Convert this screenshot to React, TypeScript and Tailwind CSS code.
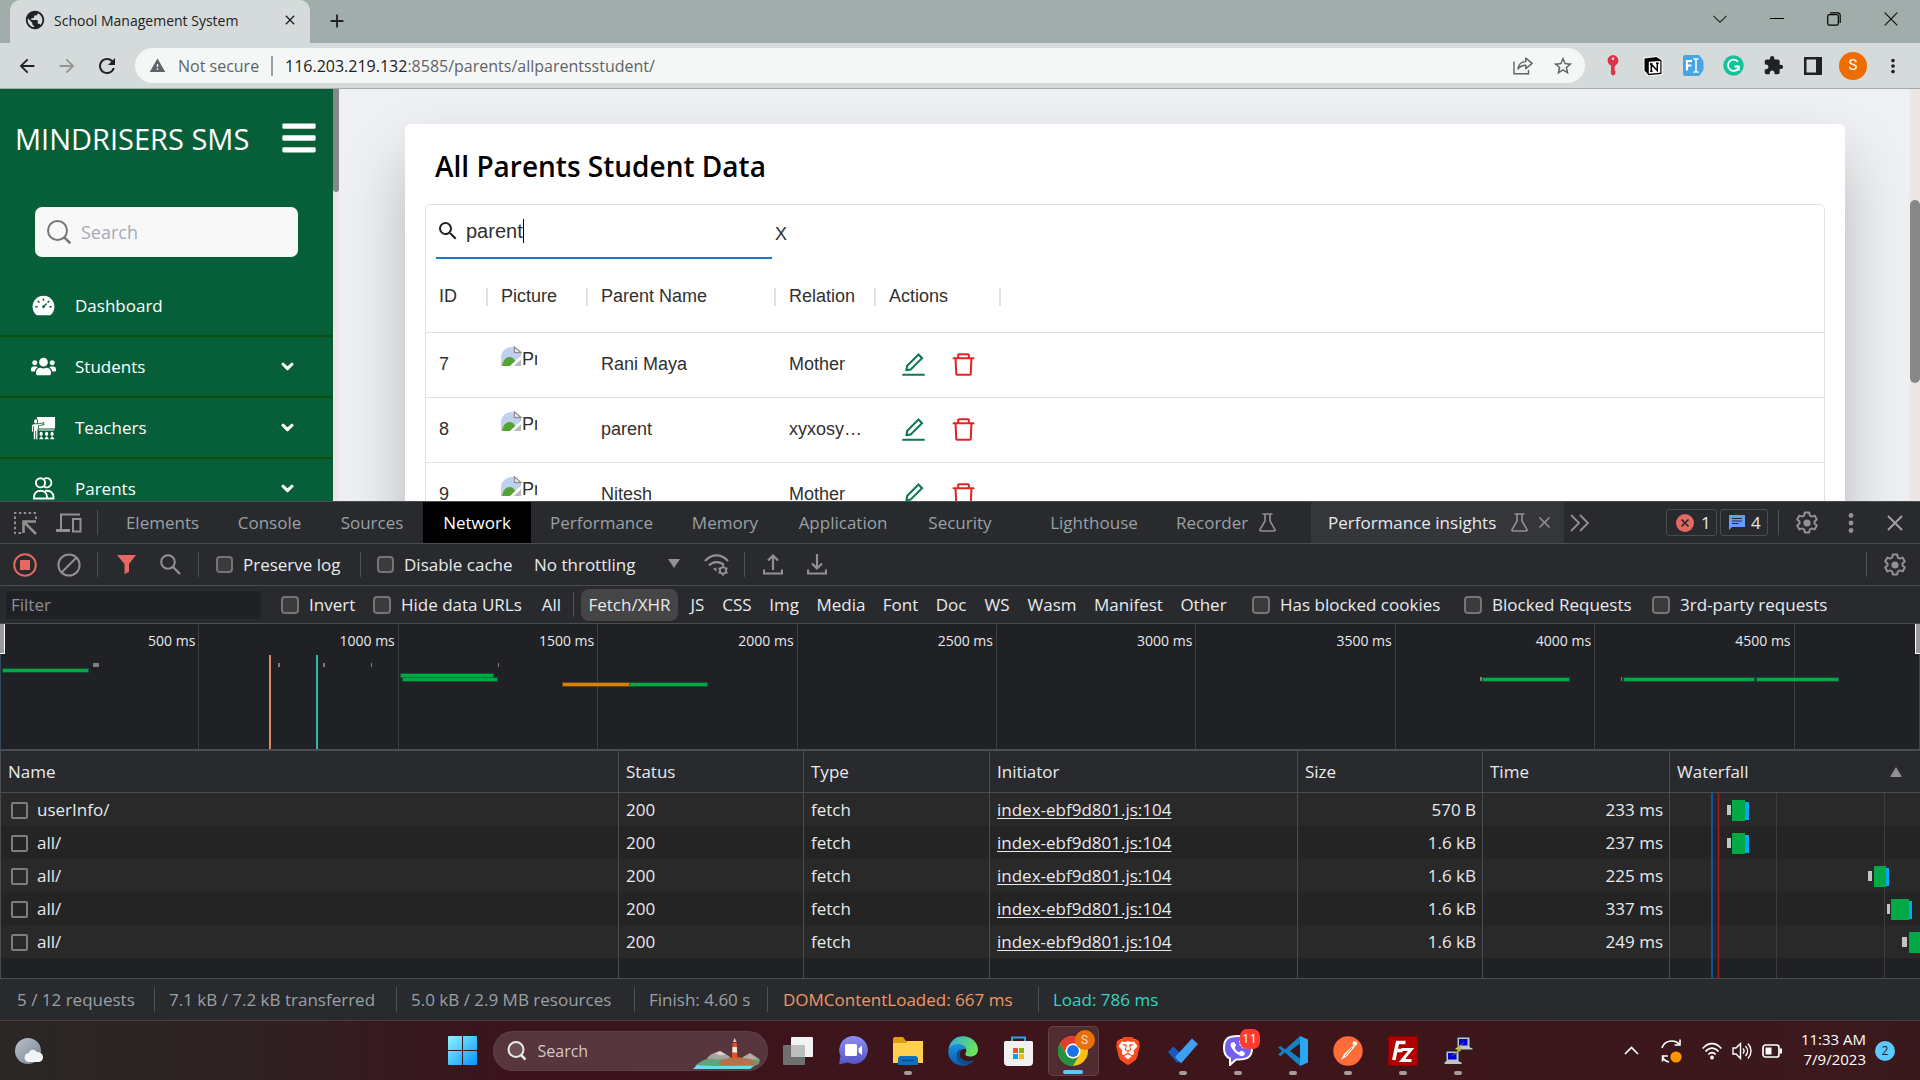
import React from "react";
import {
  MdAdd, MdArrowBack, MdArrowForward, MdClose, MdExtension, MdMoreVert, MdPublic, MdRefresh, MdSearch, MdStarBorder, MdWarning,
} from "react-icons/md";
import { FaBars, FaChevronDown, FaUsers } from "react-icons/fa";
import { AiFillDashboard, AiOutlineDelete, AiOutlineEdit } from "react-icons/ai";
import { GiTeacher } from "react-icons/gi";
import { SiBrave } from "react-icons/si";

type Kids = { children?: React.ReactNode };

/* ---------- Browser chrome ---------- */

function TabStrip() {
  return (
    <header className="flex h-[43px] shrink-0 items-stretch bg-[#a0adaa] text-[#202124]">
      <div className="ml-[10px] flex w-[300px] items-center rounded-t-[10px] bg-[#d5dbda] pb-[3px] pl-[14px] pr-[10px]">
        <MdPublic className="size-[22px] shrink-0" />
        <span className="ml-2 flex-1 whitespace-nowrap text-[14px]">School Management System</span>
        <button aria-label="Close tab" className="flex size-5 items-center justify-center"><MdClose className="size-4" /></button>
      </div>
      <button aria-label="New tab" className="ml-[16px] flex items-center pb-[2px]"><MdAdd className="size-[22px]" /></button>
      <div className="ml-auto flex items-center pb-[6px] pr-[1px]">
        <button aria-label="Search tabs" className="flex w-[57px] justify-center">
          <svg width="14" height="8" viewBox="0 0 14 8" fill="none" stroke="#222" strokeWidth="1.1"><path d="M.5.8 7 7.2 13.5.8" /></svg>
        </button>
        <button aria-label="Minimize" className="flex w-[57px] justify-center">
          <svg width="14" height="2" viewBox="0 0 14 2"><path d="M0 .5h14" stroke="#000" strokeWidth="1" /></svg>
        </button>
        <button aria-label="Restore" className="flex w-[57px] justify-center">
          <svg width="14" height="14" viewBox="0 0 14 14" fill="none" stroke="#000" strokeWidth="1.2"><rect x=".7" y="2.6" width="10.6" height="10.6" rx="1.6" /><path d="M3 .8h7.6a2.6 2.6 0 0 1 2.6 2.6V11" /></svg>
        </button>
        <button aria-label="Close window" className="flex w-[57px] justify-center">
          <svg width="14" height="14" viewBox="0 0 14 14"><path d="M.7.7l12.6 12.6M13.3.7.7 13.3" stroke="#111" strokeWidth="1.2" /></svg>
        </button>
      </div>
    </header>
  );
}

function ToolbarSlot({ children, label }: Kids & { label: string }) {
  return <button aria-label={label} className="flex w-10 items-center justify-center">{children}</button>;
}

function AddressBar() {
  return (
    <div className="flex h-[46px] shrink-0 items-center border-b border-[#a3acab] bg-[#d5dbda] pl-[7px] pr-[7px] text-[#202124]">
      <ToolbarSlot label="Back"><MdArrowBack className="size-[22px]" /></ToolbarSlot>
      <ToolbarSlot label="Forward"><MdArrowForward className="size-[22px] text-[#8f9594]" /></ToolbarSlot>
      <ToolbarSlot label="Reload"><MdRefresh className="size-6" /></ToolbarSlot>
      <div className="ml-2 flex h-[35px] flex-1 items-center rounded-full bg-[#f4f7f6] pl-[14px] pr-[2px]">
        <MdWarning className="size-[17px] text-[#5f6368]" />
        <span className="ml-3 w-[85px] whitespace-nowrap text-[16px] text-[#5f6368]">Not secure</span>
        <span className="ml-2 h-5 w-[2px] bg-[#9a9fa0]" />
        <span className="ml-[12px] flex-1 whitespace-nowrap text-[16px] text-[#5f6368]"><span className="text-[#202124]">116.203.219.132</span>:8585/parents/allparentsstudent/</span>
        <ToolbarSlot label="Share">
          <svg width="20" height="19" viewBox="0 0 20 19" fill="none" stroke="#5f6368" strokeWidth="1.4"><path d="M1 5.5V17.8h14.5V14" /><path d="M5 13c.4-4.6 3-7.2 7.8-7.4V2l6.300 5.400-6.300 5.200V9.200C9.500 9.200 7 10.200 5 13Z" strokeLinejoin="round" /></svg>
        </ToolbarSlot>
        <ToolbarSlot label="Bookmark"><MdStarBorder className="size-[22px] text-[#5f6368]" /></ToolbarSlot>
      </div>
      <div className="ml-[8px] flex items-center">
        <ToolbarSlot label="Password extension">
          <svg width="12" height="21" viewBox="0 0 12 21"><circle cx="6" cy="5.500" r="5.400" fill="#dd3547" /><circle cx="6" cy="3.800" r="1.300" fill="#d5dbda" /><path d="M4 9h4.300v2.500l-1.300 1 1.300 1-1.300 1 1.300 1V19L6.200 20.800 4 19Z" fill="#dd3547" /></svg>
        </ToolbarSlot>
        <ToolbarSlot label="Notion">
          <svg width="20" height="20" viewBox="0 0 20 20"><path d="M1.500 2.500 13.500 1l5 3.200V18l-13 1.200-4-4.700Z" fill="#fff" stroke="#fff" strokeWidth="2" /><path d="M1.500 2.500 13.500 1l5 3.200V18l-13 1.200-4-4.700Z" fill="#000" /><path d="M5.800 5.700 17.300 4.900V16.800L5.800 17.700Z" fill="#fff" /><path d="M8.300 15V8.200l6 6.500V7.300M7 8h2.700M7.200 15.200h2.400M13 7.300h2.700" fill="none" stroke="#000" strokeWidth="1.500" /></svg>
        </ToolbarSlot>
        <ToolbarSlot label="Fill extension">
          <svg width="21" height="21" viewBox="0 0 21 21"><path d="M2 0h14l4.500 6v9L16 21H2a2 2 0 0 1-2-2V2a2 2 0 0 1 2-2Z" fill="#46a5e5" /><path d="M4 15.500V6h5M4 10.500h4.400" fill="none" stroke="#fff" strokeWidth="2.200" /><path d="M10.500 3.800c1.500 0 2 .4 2.500 1 .500-.6 1-1 2.500-1M10.500 17.300c1.500 0 2-.4 2.500-1 .500.6 1 1 2.500 1M13 4.800v11.500" fill="none" stroke="#fff" strokeWidth="1.500" /></svg>
        </ToolbarSlot>
        <ToolbarSlot label="Grammarly">
          <svg width="21" height="21" viewBox="0 0 21 21"><circle cx="10.500" cy="10.500" r="10.200" fill="#15c39a" /><path d="M15 6.800A5.600 5.600 0 1 0 15.500 13M11.500 11.500h4.300v4" fill="none" stroke="#fff" strokeWidth="1.800" /></svg>
        </ToolbarSlot>
        <ToolbarSlot label="Extensions"><MdExtension className="size-[21px]" /></ToolbarSlot>
        <ToolbarSlot label="Side panel">
          <svg width="18" height="18" viewBox="0 0 18 18"><path d="M0 0h18v18H0ZM2.500 2.500v13H12v-13Z" fill="#202124" fillRule="evenodd" /></svg>
        </ToolbarSlot>
        <ToolbarSlot label="Profile"><span className="flex size-7 items-center justify-center rounded-full bg-[#ef6c00] font-[Roboto] text-[15px] text-white">S</span></ToolbarSlot>
        <ToolbarSlot label="Menu"><MdMoreVert className="size-[22px]" /></ToolbarSlot>
      </div>
    </div>
  );
}

/* ---------- Page ---------- */

function ParentsIcon({ className }: { className?: string }) {
  return (
    <svg viewBox="0 0 25 25" className={className} fill="none" stroke="currentColor" strokeWidth="1.900">
      <circle cx="9.500" cy="6.800" r="4.600" /><path d="M13 3.100a4.600 4.600 0 1 1 0 7.400" />
      <path d="M3 22.500v-1.500c0-4 2.800-6.300 6.500-6.300S16 17 16 21v1.500Z" />
      <path d="M14 14.800c5-.6 8.500 1.700 8.500 6.200v1.500H17" />
    </svg>
  );
}

const menu = [
  { label: "Dashboard", Icon: AiFillDashboard, sub: false },
  { label: "Students", Icon: FaUsers, sub: true },
  { label: "Teachers", Icon: GiTeacher, sub: true },
  { label: "Parents", Icon: ParentsIcon, sub: true },
];

function Sidebar() {
  return (
    <>
      <aside className="w-[333px] shrink-0 overflow-hidden bg-[#075f3a] text-white">
        <div className="flex h-[118px] items-start justify-between pl-[15px] pr-[15px] pt-[28px]">
          <h1 className="whitespace-nowrap text-[29px] leading-[44px]">MINDRISERS SMS</h1>
          <button aria-label="Toggle menu" className="mt-[2px]"><FaBars className="size-[38px]" /></button>
        </div>
        <label className="ml-[35px] flex h-[50px] w-[263px] items-center rounded-[7px] bg-[#f8f8f8] pl-[12px]">
          <svg width="24" height="24" viewBox="0 0 24 24" fill="none" stroke="#77777b" strokeWidth="2"><circle cx="10.500" cy="10.500" r="9.500" /><path d="m17.300 17.300 6 6" strokeWidth="2.600" /></svg>
          <input aria-label="Search" placeholder="Search" className="ml-[10px] w-[200px] bg-transparent text-[18px] outline-none placeholder:text-[#a4abb8]" />
        </label>
        <nav className="mt-[19px]">
          {menu.map(({ label, Icon, sub }) => (
            <a key={label} href="#" className="flex h-[61px] items-center border-b-2 border-[#0a5209] pl-[31px] pr-[39px]">
              <Icon className="size-[25px]" />
              <span className="ml-[19px] flex-1 text-[17px]">{label}</span>
              {sub && <FaChevronDown className="size-[13px] stroke-current stroke-[40]" />}
            </a>
          ))}
        </nav>
      </aside>
      <div className="w-[6px] shrink-0 bg-[#ece6e6]"><div className="h-[103px] rounded-b-full bg-[#888]" /></div>
    </>
  );
}

function BrokenImage() {
  return (
    <span role="img" aria-label="Profile" className="flex h-[37px] w-9 items-start overflow-hidden whitespace-nowrap">
      <svg width="21" height="20" viewBox="0 0 21 20" className="shrink-0">
        <path d="M0 20V11C.5 5 5 1 13 0.500V6h7v6L11 20Z" fill="#c0d0f0" />
        <path d="M1 20c1-6 4-9 7.500-9 3 0 4.500 2 6 4.500L11 20Z" fill="#54a335" />
        <path d="M13.500 1v5.500H20Z" fill="#fff" stroke="#909090" strokeWidth="1.300" />
        <path d="M20 6.500V10L10 20h3l7-7v7h-6.500" fill="#b9b9b9" />
        <path d="M20.500 9 9 20h3.500l8-7.500Z" fill="#fff" />
      </svg>
      <span className="text-[18px] leading-[26px]">Profile</span>
    </span>
  );
}

const parents = [
  ["7", "Rani Maya", "Mother"],
  ["8", "parent", "xyxosyxosy"],
  ["9", "Nitesh", "Mother"],
];

function HeadCell({ children }: Kids) {
  return <th className="p-0 font-normal"><div className="flex items-center justify-between pl-[13px]"><span className="whitespace-nowrap">{children}</span><span className="h-[18px] w-[2px] bg-[#e0e0e0]" /></div></th>;
}

function ParentsPage() {
  return (
    <main className="min-w-0 flex-1 overflow-hidden bg-[#eff0f3] pl-[66px] pr-[65px] pt-[35px]">
      <section className="h-[600px] rounded-t-[6px] bg-white px-5 pt-[20px] shadow-[0_31px_62px_-6px_rgba(0,0,0,0.28)]">
        <h2 className="pl-[10px] text-[28px] font-semibold leading-[44px] text-black">All Parents Student Data</h2>
        <div className="mt-[16px] rounded-[5px] border border-[#e0e0e0] font-['Liberation_Sans',sans-serif] text-[18px] text-[#303030]">
          <div className="flex h-[57px] items-center pl-[10px]">
            <div className="flex h-[50px] w-[336px] items-center border-b-2 border-[#1976d2] pb-[4px]">
              <MdSearch className="size-[24px] text-[#212121]" />
              <input aria-label="Filter rows" defaultValue="parent" className="ml-[6px] w-[57px] bg-transparent text-[20px] outline-none" />
              <span className="h-6 w-px bg-black" />
            </div>
            <button aria-label="Clear" className="ml-[3px] pt-[2px] text-[18px]">X</button>
          </div>
          <table className="w-full table-fixed border-collapse text-left">
            <colgroup>
              <col className="w-[62px]" /><col className="w-[100px]" /><col className="w-[188px]" /><col className="w-[100px]" /><col className="w-[125px]" /><col />
            </colgroup>
            <thead>
              <tr className="h-[70px] border-b border-[#e0e0e0]">
                <HeadCell>ID</HeadCell><HeadCell>Picture</HeadCell><HeadCell>Parent Name</HeadCell><HeadCell>Relation</HeadCell><HeadCell>Actions</HeadCell><td />
              </tr>
            </thead>
            <tbody>
              {parents.map(([id, name, relation]) => (
                <tr key={id} className="h-[65px] border-b border-[#e0e0e0]">
                  <td className="pl-[13px]">{id}</td>
                  <td className="pl-[13px]"><BrokenImage /></td>
                  <td className="pl-[13px]">{name}</td>
                  <td className="truncate pl-[13px] pr-[11px]">{relation}</td>
                  <td className="pl-[23px]">
                    <span className="flex items-center gap-[21px]">
                      <button aria-label="Edit"><AiOutlineEdit className="size-[29px] text-[#0f7a50]" /></button>
                      <button aria-label="Delete"><AiOutlineDelete className="size-[29px] text-[#e02525]" /></button>
                    </span>
                  </td>
                  <td />
                </tr>
              ))}
            </tbody>
          </table>
        </div>
      </section>
    </main>
  );
}

/* ---------- DevTools ---------- */

function Sep({ className = "" }: { className?: string }) {
  return <span className={"h-[25px] w-px shrink-0 bg-[#4d5054] " + className} />;
}

function Flask() {
  return <svg width="17" height="19" viewBox="0 0 17 19" fill="none" stroke="#919191" strokeWidth="1.600"><path d="M3.500 1h10M6 1v7L1 16.500c-.4.900.1 1.500 1 1.500h13c.9 0 1.400-.6 1-1.500L11 8V1" /></svg>;
}

function Gear() {
  return (
    <svg width="24" height="24" viewBox="0 0 24 24" fill="none" stroke="#919191" strokeWidth="2"><circle cx="12" cy="12" r="3.600" fill="#919191" stroke="none" /><path d="M9.800 1.500h4.400l.6 3 1.900 1.100 2.900-1 2.200 3.800-2.300 2v2.200l2.300 2-2.200 3.800-2.900-1-1.900 1.100-.6 3H9.800l-.6-3-1.900-1.100-2.900 1-2.200-3.800 2.300-2v-2.200l-2.300-2 2.200-3.800 2.900 1 1.900-1.100Z" strokeLinejoin="round" /></svg>
  );
}

function DevTabs() {
  return (
    <div className="flex h-[42px] shrink-0 items-stretch border-b border-[#494c50] text-[17px] text-[#9aa0a6]">
      <div className="flex w-[97px] items-center pl-[13px]">
        <button aria-label="Inspect">
          <svg width="24" height="24" viewBox="0 0 24 24" fill="none" stroke="#919191" strokeWidth="2"><path d="M1 2h22" strokeDasharray="2.400 2.500" /><path d="M2 5.500V23M23 5.500V9M5.500 22H9" strokeDasharray="2.600 2.500" /><path d="M10.500 22V10.500H23M11.500 11.500 23 23" strokeWidth="2.600" /></svg>
        </button>
        <button aria-label="Device toolbar" className="ml-[19px]">
          <svg width="26" height="20" viewBox="0 0 26 20" fill="none" stroke="#919191" strokeWidth="2"><path d="M5 16V1.500h19" /><path d="M0 17.500h14" strokeWidth="3" /><rect x="17" y="6" width="7.500" height="12.500" /></svg>
        </button>
      </div>
      <Sep className="self-center" />
      <div role="tablist" className="ml-[9px] flex">
        <button role="tab" className="w-[111px]">Elements</button>
        <button role="tab" className="w-[103px]">Console</button>
        <button role="tab" className="w-[102px]">Sources</button>
        <button role="tab" className="w-[108px] bg-black text-white">Network</button>
        <button role="tab" className="w-[141px]">Performance</button>
        <button role="tab" className="w-[106px]">Memory</button>
        <button role="tab" className="w-[130px]">Application</button>
        <button role="tab" className="w-[104px]">Security</button>
        <button role="tab" className="ml-[17px] w-[130px]">Lighthouse</button>
        <button role="tab" className="flex w-[152px] items-center gap-[11px] pl-[17px]">Recorder <Flask /></button>
        <button role="tab" className="flex w-[253px] items-center bg-[#35363a] pl-[17px] text-[#e8eaed]"><span className="w-[183px] whitespace-nowrap text-left">Performance insights</span><Flask /><MdClose className="ml-[7px] size-[19px] text-[#919191]" /></button>
        <button aria-label="More tabs" className="ml-[6px]">
          <svg width="20" height="18" viewBox="0 0 20 18" fill="none" stroke="#919191" strokeWidth="1.800"><path d="m1 1 8 8-8 8M10 1l8 8-8 8" /></svg>
        </button>
      </div>
      <div className="ml-auto flex items-center text-[#e8eaed]">
        <button className="flex h-[27px] w-[51px] items-center rounded-[3px] border border-[#494c50] pl-[9px]">
          <svg width="18" height="18" viewBox="0 0 18 18"><circle cx="9" cy="9" r="9" fill="#e46962" /><path d="m5.500 5.500 7 7m0-7-7 7" stroke="#292a2d" strokeWidth="1.700" /></svg>
          <span className="ml-[7px]">1</span>
        </button>
        <button className="ml-[3px] flex h-[27px] w-[48px] items-center rounded-[3px] border border-[#494c50] pl-[8px]">
          <svg width="16" height="15" viewBox="0 0 16 15"><path d="M0 0h16v12H3l-3 3Z" fill="#669df6" /><path d="M3 3.500h10M3 6h10M3 8.500h6.500" stroke="#292a2d" strokeWidth="1.200" /></svg>
          <span className="ml-[6px]">4</span>
        </button>
        <Sep className="ml-[10px]" />
        <button aria-label="Settings" className="ml-[16px]"><Gear /></button>
        <button aria-label="More options" className="ml-[29px]">
          <svg width="6" height="20" viewBox="0 0 6 20" fill="#919191"><circle cx="3" cy="2.500" r="2.400" /><circle cx="3" cy="10" r="2.400" /><circle cx="3" cy="17.500" r="2.400" /></svg>
        </button>
        <button aria-label="Close DevTools" className="ml-[33px] mr-[17px]">
          <svg width="16" height="16" viewBox="0 0 16 16" stroke="#a0a0a0" strokeWidth="2"><path d="m1 1 14 14M15 1 1 15" /></svg>
        </button>
      </div>
    </div>
  );
}

function Check({ label, boxClass, className }: { label: string; boxClass: string; className: string }) {
  return (
    <label className={"flex shrink-0 items-center whitespace-nowrap " + className}>
      <input type="checkbox" className={"shrink-0 appearance-none rounded-[4px] border-2 border-[#757575] bg-[#3b3b3b] " + boxClass} />
      {label}
    </label>
  );
}

function NetworkToolbar() {
  return (
    <div className="flex h-[42px] shrink-0 items-center border-b border-[#494c50] pl-[13px] text-[17px] text-[#e8eaed]">
      <button aria-label="Record">
        <svg width="24" height="24" viewBox="0 0 24 24"><circle cx="12" cy="12" r="10.800" fill="none" stroke="#e46962" strokeWidth="2" /><rect x="7" y="7" width="10" height="10" fill="#e46962" /></svg>
      </button>
      <button aria-label="Clear log" className="ml-[20px]">
        <svg width="24" height="24" viewBox="0 0 24 24" fill="none" stroke="#919191" strokeWidth="2"><circle cx="12" cy="12" r="10.600" /><path d="M4.500 19.500 19.500 4.500" /></svg>
      </button>
      <Sep className="ml-[16px]" />
      <button aria-label="Filter" className="ml-[19px]">
        <svg width="19" height="19" viewBox="0 0 19 19"><path d="M0 0h19l-7 9v8l-4.500 2V9Z" fill="#e46962" /></svg>
      </button>
      <button aria-label="Find" className="ml-[24px]">
        <svg width="21" height="21" viewBox="0 0 21 21" fill="none" stroke="#919191" strokeWidth="2"><circle cx="8" cy="8" r="6.800" /><path d="m13 13 7 7" strokeWidth="2.400" /></svg>
      </button>
      <Sep className="ml-[17px]" />
      <Check label="Preserve log" boxClass="size-[17px] mr-[10px]" className="ml-[17px] w-[144px]" />
      <Sep />
      <Check label="Disable cache" boxClass="size-[17px] mr-[10px]" className="ml-[16px] w-[157px]" />
      <div className="relative w-[146px]">
        <select aria-label="Throttling" className="w-full appearance-none bg-transparent outline-none"><option>No throttling</option></select>
        <svg width="12" height="9" viewBox="0 0 12 9" className="pointer-events-none absolute right-0 top-[7px]"><path d="M0 0h12L6 9Z" fill="#919191" /></svg>
      </div>
      <button aria-label="Network conditions" className="ml-[24px]">
        <svg width="26" height="22" viewBox="0 0 26 22" fill="none" stroke="#919191" strokeWidth="2.200"><path d="M1 7C8-.5 17-.5 24 7" /><path d="M5 11.500c4-4.500 11-4.500 15-.5" /><path d="M9 14.500 12.500 18V13.500Z" fill="#919191" stroke="none" /><circle cx="19" cy="16.500" r="3.200" strokeWidth="2" /><path d="M19 11.200v10.600M14.400 13.900l9.200 5.300M14.400 19.200l9.200-5.300" strokeWidth="1.600" strokeDasharray="2 6.600" /></svg>
      </button>
      <Sep className="ml-[14px]" />
      <button aria-label="Import HAR" className="ml-[18px]">
        <svg width="20" height="21" viewBox="0 0 20 21" fill="none" stroke="#919191" strokeWidth="2.200"><path d="M1 15.500v4h18v-4M10 16V1.500M5 6.500l5-5 5 5" /></svg>
      </button>
      <button aria-label="Export HAR" className="ml-[24px]">
        <svg width="20" height="21" viewBox="0 0 20 21" fill="none" stroke="#919191" strokeWidth="2.200"><path d="M1 15.500v4h18v-4M10 0v14.500M5 9.500l5 5 5-5" /></svg>
      </button>
      <Sep className="ml-auto" />
      <button aria-label="Network settings" className="ml-[16px] mr-[13px]"><Gear /></button>
    </div>
  );
}

function FilterBar() {
  const box = "size-[18px] mr-[10px]";
  return (
    <div className="flex h-[38px] shrink-0 items-center border-b border-[#494c50] pl-[6px] text-[17px] text-[#e8eaed]">
      <input aria-label="Filter" placeholder="Filter" className="h-[28px] w-[255px] bg-[#202124] pl-[5px] outline-none placeholder:text-[#8b9095]" />
      <Check label="Invert" boxClass={box} className="ml-[20px] w-[92px]" />
      <Check label="Hide data URLs" boxClass={box} className="w-[168px]" />
      <button className="w-[21px]">All</button>
      <Sep className="ml-[11px]" />
      <button className="ml-[7px] h-[32px] w-[97px] rounded-[8px] bg-[#454545]">Fetch/XHR</button>
      <button className="ml-[8px] w-[23px]">JS</button>
      <button className="ml-[10px] w-[36px]">CSS</button>
      <button className="ml-[11px] w-[36px]">Img</button>
      <button className="ml-[12px] w-[54px]">Media</button>
      <button className="ml-[12px] w-[41px]">Font</button>
      <button className="ml-[12px] w-[36px]">Doc</button>
      <button className="ml-[12px] w-[32px]">WS</button>
      <button className="ml-[12px] w-[54px]">Wasm</button>
      <button className="ml-[12px] w-[75px]">Manifest</button>
      <button className="ml-[12px] w-[51px]">Other</button>
      <Check label="Has blocked cookies" boxClass={box} className="ml-[23px] w-[212px]" />
      <Check label="Blocked Requests" boxClass={box} className="w-[188px]" />
      <Check label="3rd-party requests" boxClass={box} className="" />
    </div>
  );
}

const ticks = ["500 ms", "1000 ms", "1500 ms", "2000 ms", "2500 ms", "3000 ms", "3500 ms", "4000 ms", "4500 ms"];

const spans: [number, number, number, string][] = [
  [3, 88, 46, "#00a846"], [401, 493, 51, "#00a846"], [403, 497, 55, "#00a846"], [563, 629, 60, "#d98200"], [630, 707, 60, "#00a846"],
  [1483, 1569, 55, "#00a846"], [1624, 1754, 55, "#00a846"], [1757, 1838, 55, "#00a846"],
];
const marks: [number, number, number][] = [[93, 6, 41], [278, 2, 41], [323, 2, 41], [371, 1, 41], [498, 1, 41], [1480, 2, 55], [1621, 1, 55]];

function Overview() {
  return (
    <div className="relative h-[127px] shrink-0 overflow-hidden border-b-2 border-[#494c50] bg-[#202124]">
      <div className="flex h-full">
        {ticks.map((t) => (
          <div key={t} className="w-[10.385%] shrink-0 border-r border-[#3c3e41] pr-[3px] pt-[6px] text-right text-[14px] leading-[22px] text-[#e8eaed]">{t}</div>
        ))}
      </div>
      <svg className="absolute inset-0 h-full w-full" viewBox="0 0 1920 125" preserveAspectRatio="none">
        {spans.map(([a, b, y, c]) => (
          <g key={a}><rect x={a - 1} y={y - 2} width={b - a + 2} height="5" fill={c} opacity=".35" /><rect x={a} y={y - 1} width={b - a} height="3" fill={c} /><rect x={b} y={y - 1} width="1" height="3" fill="#12506f" /></g>
        ))}
        {marks.map(([x, w, y]) => <rect key={x} x={x} y={y - 2} width={w} height="4" fill="#808080" />)}
        <rect x="269" y="31" width="2" height="94" fill="#dd8a5c" />
        <rect x="316" y="31" width="2" height="94" fill="#2fb8a8" />
        <rect x="0" y="0" width="5" height="30" fill="#9a9a9a" /><path d="M4.500 0V29.500H0" fill="none" stroke="#fff" />
        <rect x="1915" y="0" width="5" height="30" fill="#9a9a9a" /><path d="M1915.500 0V29.500H1920" fill="none" stroke="#fff" />
        <rect x="0" y="30" width="1" height="95" fill="#33475f" /><rect x="1919" y="30" width="1" height="95" fill="#33475f" />
      </svg>
    </div>
  );
}

const requests = [
  ["userInfo/", "570 B", "233 ms"],
  ["all/", "1.6 kB", "237 ms"],
  ["all/", "1.6 kB", "225 ms"],
  ["all/", "1.6 kB", "337 ms"],
  ["all/", "1.6 kB", "249 ms"],
];

const waterfall = [
  [57, 4, 62, 13, 4], [57, 4, 62, 13, 4], [198, 4, 204, 12, 3], [217, 3, 221, 18, 3], [232, 5, 239, 11, 0],
];

function Waterfall() {
  return (
    <svg className="block h-[185px] w-full" viewBox="0 0 250 185" preserveAspectRatio="none">
      {waterfall.map((_, i) => <rect key={i} y={i * 33} width="250" height="33" fill={i % 2 ? "#242424" : "#292929"} />)}
      <path d="M106.500 0v186M214.500 0v186" stroke="#3d3d3d" />
      <path d="M42 0v186" stroke="#0a62c4" strokeWidth="1.500" /><path d="M48.500 0v186" stroke="#a51c1c" strokeWidth="1.500" />
      {waterfall.map(([q, qw, g, gw, bw], i) => (
        <g key={i}>
          <rect x={q} y={i * 33 + 12} width={qw} height="10" fill="#c4c4c4" />
          <rect x={g} y={i * 33 + 7} width={gw} height="21" fill="#00a846" />
          <rect x={g + gw} y={i * 33 + 9} width={bw} height="18" fill="#03a9f4" />
        </g>
      ))}
    </svg>
  );
}

function RequestTable() {
  const th = "border-l border-[#494c50] px-[7px] py-0 font-normal";
  const td = "border-l border-[#494c50] pl-[7px] pr-[6px] py-0";
  return (
    <table className="w-full table-fixed border-separate border-spacing-0 bg-[#202124] text-left text-[17px] text-[#e8eaed]">
      <colgroup>
        <col /><col className="w-[185px]" /><col className="w-[186px]" /><col className="w-[308px]" /><col className="w-[185px]" /><col className="w-[187px]" /><col className="w-[251px]" />
      </colgroup>
      <thead>
        <tr className="h-[42px] bg-[#292a2d] *:border-b">
          <th className={th}>Name</th><th className={th}>Status</th><th className={th}>Type</th><th className={th}>Initiator</th><th className={th}>Size</th><th className={th}>Time</th>
          <th className={th}>
            <span className="flex items-center justify-between pr-[11px]">Waterfall<svg width="12" height="10" viewBox="0 0 12 10"><path d="M0 10h12L6 0Z" fill="#919191" /></svg></span>
          </th>
        </tr>
      </thead>
      <tbody>
        {requests.map(([name, size, time], i) => (
          <tr key={i} className="h-[33px] odd:bg-[#292929] even:bg-[#242424]">
            <td className={td}>
              <label className="flex items-center pl-[3px]"><input type="checkbox" className="mr-[9px] mt-[2px] size-[17px] appearance-none rounded-[2px] border-2 border-[#7d7d7d]" />{name}</label>
            </td>
            <td className={td}>200</td>
            <td className={td}>fetch</td>
            <td className={td}><a href="#" className="underline underline-offset-2">index-ebf9d801.js:104</a></td>
            <td className={td + " text-right"}>{size}</td>
            <td className={td + " text-right"}>{time}</td>
            {i === 0 && <td rowSpan={6} className="border-l border-[#494c50] bg-[#202124] p-0"><Waterfall /></td>}
          </tr>
        ))}
        <tr className="h-[20px]">
          <td className={td} /><td className={td} /><td className={td} /><td className={td} /><td className={td} /><td className={td} />
        </tr>
      </tbody>
    </table>
  );
}

function StatusBar() {
  return (
    <footer className="flex h-[42px] items-center whitespace-nowrap border-t border-[#494c50] pl-[17px] text-[17px] text-[#9aa0a6]">
      <span className="w-[137px]">5 / 12 requests</span><Sep />
      <span className="w-[241px] pl-[14px]">7.1 kB / 7.2 kB transferred</span><Sep />
      <span className="w-[237px] pl-[14px]">5.0 kB / 2.9 MB resources</span><Sep />
      <span className="w-[132px] pl-[14px]">Finish: 4.60 s</span><Sep />
      <span className="w-[270px] pl-[15px] text-[#f29766]">DOMContentLoaded: 667 ms</span><Sep />
      <span className="pl-[14px] text-[#35d4c7]">Load: 786 ms</span>
    </footer>
  );
}

function DevTools() {
  return (
    <section className="shrink-0 border-t border-[#494c50] bg-[#292a2d]">
      <DevTabs /><NetworkToolbar /><FilterBar /><Overview /><RequestTable /><StatusBar />
    </section>
  );
}

/* ---------- Taskbar ---------- */

function TaskButton({ children, label, running, active }: Kids & { label: string; running?: boolean; active?: boolean }) {
  return (
    <button aria-label={label} className={"relative mx-[2px] flex h-[50px] w-[51px] items-center justify-center rounded-[5px] " + (active ? "border border-white/10 bg-white/10" : "")}>
      {children}
      {running && <span className={"absolute bottom-[1px] left-1/2 h-1 -translate-x-1/2 rounded-full " + (active ? "w-5 bg-[#5bc8ff]" : "w-2 bg-[#a89a9d]")} />}
    </button>
  );
}

function Taskbar() {
  return (
    <footer className="flex h-[60px] shrink-0 items-center border-t border-[#503c3e] bg-[linear-gradient(90deg,#2a2725_0%,#2e2224_12%,#3c141d_26%,#3e151a_65%,#3a191c_100%)] text-white">
      <div className="flex flex-1 items-center pl-[14px]">
        <button aria-label="Weather">
          <svg width="30" height="30" viewBox="0 0 30 30"><defs><linearGradient id="moon" x1="0" y1="0" x2="1" y2="1"><stop offset="0" stopColor="#b9c2cc" /><stop offset="1" stopColor="#77828e" /></linearGradient></defs><circle cx="14" cy="15" r="13" fill="url(#moon)" /><path d="M15 26a4.500 4.500 0 0 1 0-9c1-4 6-4 7.500-1 4 0 6.500 2 6.500 5s-2 5-5 5Z" fill="#f1f4f7" /></svg>
        </button>
      </div>
      <div className="flex items-center pl-[24px]">
        <button aria-label="Start" className="mr-[16px]">
          <svg width="29" height="29" viewBox="0 0 29 29"><defs><linearGradient id="win" x1="0" y1="0" x2="29" y2="29" gradientUnits="userSpaceOnUse"><stop offset="0" stopColor="#8af6ff" /><stop offset="1" stopColor="#0a93ff" /></linearGradient></defs><path d="M0 1a1 1 0 0 1 1-1h13v14H0ZM15 0h13a1 1 0 0 1 1 1v13H15ZM0 15h14v14H1a1 1 0 0 1-1-1ZM15 15h14v13a1 1 0 0 1-1 1H15Z" fill="url(#win)" /></svg>
        </button>
        <label className="mr-[3px] flex h-10 w-[275px] items-center overflow-hidden rounded-full border border-white/5 bg-white/14 pl-[13px]">
          <svg width="20" height="20" viewBox="0 0 20 20" fill="none" stroke="#e8e8e8" strokeWidth="2"><circle cx="9" cy="8.500" r="7.500" fill="#ffffff22" /><path d="m14 14 4.500 4.500" strokeWidth="2.500" /></svg>
          <input aria-label="Taskbar search" placeholder="Search" className="ml-[11px] w-[150px] bg-transparent text-[16px] outline-none placeholder:text-[#d3c8ca]" />
          <svg width="68" height="32" viewBox="0 0 68 32" className="ml-[5px] mt-[4px]">
            <path d="M12 25c3-6 6-8 9-9l6-2 9 5 5 6Z" fill="#a9a39f" /><path d="M22 16.500l5-2.500 6 3.500-5 1Z" fill="#d6d2cf" /><path d="M50 20l7-4 9 6v3H46Z" fill="#b5aca6" />
            <path d="M2 29c5-4 10-8 18-7l30 1 17-1-1 5-9 4Z" fill="#62a37e" />
            <path d="M25 27c1-4 10-6 18-7 12 1 18 3 22 6-5 4-33 5-40 1Z" fill="#b4714c" />
            <path d="M0 32l4-4c20 2 40 0 57 1l-4 3Z" fill="#6fdaf0" />
            <path d="M39 21 39.700 6h4L44.500 21Z" fill="#e9501f" /><path d="M39.300 15.500 39.500 10h4.300l.4 5.500Z" fill="#f3ece8" /><path d="M39.800 5 41.700 1l1.900 4Z" fill="#e9bcb0" />
          </svg>
        </label>
        <TaskButton label="Task view"><svg width="30" height="28" viewBox="0 0 30 28"><rect x="0" y="8" width="22" height="20" rx="1" fill="#6f6f6f" /><rect x="8" y="0" width="22" height="20" rx="1" fill="#f3f3f3" /><path d="M8 8h14v12H8Z" fill="#bdbdbd" /></svg></TaskButton>
        <TaskButton label="Chat"><svg width="29" height="29" viewBox="0 0 29 29"><defs><linearGradient id="chat" x1="0" y1="0" x2="0" y2="1"><stop offset="0" stopColor="#8b8ff0" /><stop offset="1" stopColor="#5355c4" /></linearGradient></defs><path d="M15 0a14 14 0 1 1-6.500 26.500L0 28.500 1.500 20A14 14 0 0 1 15 0Z" fill="url(#chat)" /><rect x="6" y="8" width="12" height="12" rx="1.500" fill="#fff" /><path d="m19.500 12.500 3.500-3v9.500l-3.500-3Z" fill="#fff" /></svg></TaskButton>
        <TaskButton label="File Explorer" running><svg width="30" height="28" viewBox="0 0 30 28"><path d="M0 2a2 2 0 0 1 2-2h8l3 4h15v6H0Z" fill="#e19c0c" /><path d="M0 6h13l2-2h15v22H0Z" fill="#ffd04d" /><path d="M5 28v-6a3 3 0 0 1 3-3h14a3 3 0 0 1 3 3v6Z" fill="#0f6fbf" /><path d="M9 23.500h12" stroke="#0a4d94" strokeWidth="1.500" /></svg></TaskButton>
        <TaskButton label="Edge"><svg width="30" height="30" viewBox="0 0 30 30"><defs><linearGradient id="edgeTop" x1="0" y1="0" x2="1" y2=".4"><stop offset="0" stopColor="#2aa9e8" /><stop offset="1" stopColor="#6be35b" /></linearGradient><linearGradient id="edgeBody" x1="0" y1="0" x2="0" y2="1"><stop offset="0" stopColor="#1a93e0" /><stop offset="1" stopColor="#0c59a4" /></linearGradient></defs><path d="M.5 13C2 4.500 8 .3 15 .3 24 .3 30 7 30 13.500c0 4.500-3.500 7-7.500 7-3.500 0-6-1-5-3 2.500-4-1-9-6.500-9-4 0-8 1.500-10.500 4.500Z" fill="url(#edgeTop)" /><path d="M.3 14.500C1.500 10 6 8.300 10.500 8.300c3.500 0 6.500 2 7.500 5-3-1-6.500 1-6.500 5 0 5 5.500 8.500 14 6.200C22 29 17 30 14.500 29.800 6 29.500-.500 22.500.3 14.500Z" fill="url(#edgeBody)" /><path d="M11.500 18c0 6 6 8.500 14.500 6.200C21 31 8.500 29 8.500 19c0-3 2-5.500 5-6-1.300 1.300-2 3-2 5Z" fill="#0e4a8c" /></svg></TaskButton>
        <TaskButton label="Microsoft Store"><svg width="29" height="30" viewBox="0 0 29 30"><path d="M8 7V1.500h13V7" fill="none" stroke="#2aa6e8" strokeWidth="2" /><path d="M0 6.500A1.500 1.500 0 0 1 1.500 5h26A1.500 1.500 0 0 1 29 6.500V26a4 4 0 0 1-4 4H4a4 4 0 0 1-4-4Z" fill="#f1f1f1" /><path d="M9 12h5v5H9Z" fill="#f25022" /><path d="M15 12h5v5h-5Z" fill="#7fba00" /><path d="M9 18h5v5H9Z" fill="#00a4ef" /><path d="M15 18h5v5h-5Z" fill="#ffb900" /></svg></TaskButton>
        <TaskButton label="Chrome" running active>
          <svg width="30" height="30" viewBox="0 0 30 30"><circle cx="15" cy="15" r="15" fill="#fbc116" /><path d="M2 7.500A15 15 0 0 1 28 7.500H15a7.500 7.500 0 0 0-6.500 11Z" fill="#e33b2e" /><path d="M2 7.500 8.500 18.750A7.500 7.500 0 0 0 21.500 18.750L15 30A15 15 0 0 1 2 7.500Z" fill="#229342" /><circle cx="15" cy="15" r="7.500" fill="#fff" /><circle cx="15" cy="15" r="5.900" fill="#1a73e8" /></svg>
          <span className="absolute right-[3px] top-[3px] flex size-[20px] items-center justify-center rounded-full bg-[#e8710a] font-[Roboto] text-[12px] text-[#f6dcc4]">S</span>
        </TaskButton>
        <TaskButton label="Brave"><span className="relative flex"><svg width="28" height="30" viewBox="0 0 28 30"><path d="M7 3h14l4 5-2 13-9 7-9-7L3 8Z" fill="#fff" /></svg><SiBrave className="absolute inset-0 size-full text-[#fb4a1c]" /></span></TaskButton>
        <TaskButton label="To Do" running><svg width="31" height="26" viewBox="0 0 31 26"><path d="M0 14 5.500 8.500 15 18l-5.500 7Z" fill="#195abd" /><path d="M7 19 24 0.500 30 6 13 25.500Z" fill="#3f9ff0" /></svg></TaskButton>
        <TaskButton label="Viber" running>
          <svg width="30" height="31" viewBox="0 0 30 31"><path d="M15 1C5 1 1 4 1 13c0 6 2 9 6 10.500V30l6-5.500h2c10 0 14-3 14-11.500S25 1 15 1Z" fill="#7360f2" stroke="#fff" strokeWidth="2" /><path d="M9 7.500c2-1.500 3 0 4 2.500.500 1-1.500 2-1.200 3 .7 2 2.200 3.500 4 4 1.200.3 1.700-1.800 3-1.200 3 1.500 4 2.500 2.500 4.200-1.500 1.500-3 1.500-5 .3-4-2-7-5.500-8.500-9C7 9.500 7.500 8.300 9 7.500Z" fill="#fff" /><path d="M16 6.500c4 .3 6.500 3 6.500 7M16.500 9.500c2 .3 3.200 1.700 3.300 3.700" fill="none" stroke="#fff" strokeWidth="1.300" /></svg>
          <span className="absolute right-[4px] top-[3px] flex h-[20px] w-[20px] items-center justify-center rounded-[7px] bg-[#ff3b30] text-[13px]">11</span>
        </TaskButton>
        <TaskButton label="VS Code" running><svg width="30" height="30" viewBox="0 0 30 30"><path d="M22 0 7 13.500 2.500 10 0 11.300 4 15l-4 3.700L2.500 20 7 16.500 22 30Z" fill="#1381c4" /><path d="M22 7.500 12 15l10 7.500Z" fill="#3a151b" /><path d="M22 0l8 3.500v23L22 30Z" fill="#2aa7f2" /></svg></TaskButton>
        <TaskButton label="Postman" running><svg width="30" height="30" viewBox="0 0 30 30"><circle cx="15" cy="15" r="14.700" fill="#ff6c37" /><circle cx="21.800" cy="7.500" r="2.300" fill="#fff" /><path d="M20.500 9.500 11 18l-3 6 6-4 8-9.500Z" fill="#fff" /><path d="m19 12-7 8" stroke="#ff6c37" strokeWidth="1" /></svg></TaskButton>
        <TaskButton label="FileZilla" running><svg width="30" height="30" viewBox="0 0 30 30"><rect width="30" height="30" fill="#b00000" /><rect x=".5" y=".5" width="29" height="29" fill="none" stroke="#7c0000" strokeDasharray="2 1" /><path d="M17.500 6.500H9.500L5.800 24M7.500 14.500h7" fill="none" stroke="#fff" strokeWidth="3.600" /><path d="M13.500 13.500H23L14 24.500h9.500" fill="none" stroke="#fff" strokeWidth="3" /></svg></TaskButton>
        <TaskButton label="PuTTY" running><svg width="29" height="29" viewBox="0 0 29 29"><path d="M13 1h13v10l3 1v2H15l-2-2Z" fill="#c3c3c3" stroke="#222" /><rect x="15" y="3" width="8.500" height="6.500" fill="#0000d8" /><path d="M2 15h13v10l3 1v2.500H0V26l2-1Z" fill="#c3c3c3" stroke="#222" /><rect x="4" y="17" width="8.500" height="6.500" fill="#0000d8" /><path d="M20 6.500 11 13l3.500 1.200L7.500 20 17.500 14l-3.500-1.500Z" fill="#ff0" stroke="#554" strokeWidth=".5" /></svg></TaskButton>
      </div>
      <div className="flex flex-1 items-center justify-end pr-[25px]">
        <svg width="15" height="9" viewBox="0 0 15 9" fill="none" stroke="#fff" strokeWidth="1.700"><path d="m1 8 6.500-6.500L14 8" /></svg>
        <svg width="22" height="26" viewBox="0 0 22 26" fill="none" stroke="#fff" strokeWidth="1.600" className="ml-[22px]"><path d="M1 10C3 3 13 .5 18 6M19 1.500v5.500h-5.500M8 24C3.500 23 2 21 1.500 18M1.500 23.500V18H7" /><circle cx="15" cy="19" r="5.600" fill="#ff9800" stroke="none" /></svg>
        <svg width="20" height="18" viewBox="0 0 20 18" fill="none" stroke="#fff" strokeWidth="1.600" className="ml-[19px]"><path d="M.7 6.500c5.300-6.500 13.300-6.500 18.600 0M3.500 9.500c4-4.500 9-4.500 13 0M6.300 12.500c2.300-2.500 5.100-2.500 7.400 0" /><circle cx="10" cy="15.500" r="1.900" fill="#fff" stroke="none" /></svg>
        <svg width="20" height="18" viewBox="0 0 20 18" fill="none" stroke="#fff" strokeWidth="1.400" className="ml-[10px]"><path d="M1 6v6h3l4.500 4.500v-15L4 6ZM11 6.500c1.300 1.500 1.300 3.500 0 5M13.500 4c2.700 3 2.700 7 0 10M16 1.500c4 4.500 4 10.500 0 15" /></svg>
        <svg width="20" height="14" viewBox="0 0 20 14" fill="none" stroke="#fff" strokeWidth="1.700" className="ml-[10px]"><rect x="1" y="1" width="16" height="12" rx="2.500" /><rect x="3.500" y="3.500" width="6" height="7" fill="#fff" stroke="none" /><path d="M19 4.500v5" strokeWidth="2" /></svg>
        <time className="ml-[19px] pb-[4px] text-right text-[15px] leading-[20px]">11:33 AM<br />7/9/2023</time>
        <span className="ml-[9px] flex size-[20px] items-center justify-center rounded-full bg-[#5bc8ff] text-[12px] text-[#222]">2</span>
      </div>
    </footer>
  );
}

export default function App() {
  return (
    <div className="flex h-screen flex-col overflow-hidden font-['Open_Sans','Noto_Sans',sans-serif]">
      <TabStrip />
      <AddressBar />
      <div className="flex min-h-0 flex-1">
        <Sidebar />
        <ParentsPage />
        <div className="w-[10px] shrink-0 bg-[#ece6e6] pt-[111px]"><div className="h-[183px] rounded-full bg-[#888]" /></div>
      </div>
      <DevTools />
      <Taskbar />
    </div>
  );
}
